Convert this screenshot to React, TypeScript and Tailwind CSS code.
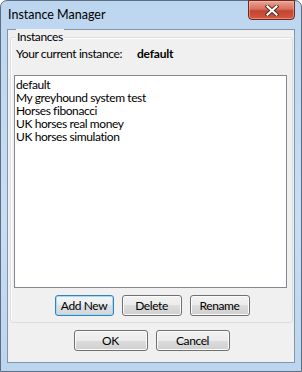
import React from "react";

const font = { fontFamily: 'Lato, "Open Sans", sans-serif' };

function Btn({ label, w, def }: { label: string; w: string; def?: boolean }) {
  return (
    <div
      className={
        "h-[21px] flex items-center justify-center rounded-[3px] border text-[12px] leading-none text-black " +
        w +
        " " +
        (def
          ? "border-[#3c7fb1] shadow-[inset_0_0_0_1px_#9fdcfa] bg-[linear-gradient(to_bottom,#f3f5f7_0%,#eaecee_50%,#dde0e3_50%,#d3d6d9_100%)]"
          : "border-[#707070] shadow-[inset_0_0_0_1px_#fbfbfb] bg-[linear-gradient(to_bottom,#f2f2f2_0%,#ebebeb_50%,#dddddd_50%,#cfcfcf_100%)]")
      }
    >
      {label}
    </div>
  );
}

export default function App() {
  const items = [
    "default",
    "My greyhound system test",
    "Horses fibonacci",
    "UK horses real money",
    "UK horses simulation",
  ];
  return (
    <div style={font} className="w-[302px] h-[372px] overflow-hidden tracking-[-0.4px]">
      <div className="relative w-[302px] h-[372px] rounded-t-[7px] border border-[#5d6e84] bg-[linear-gradient(to_bottom,#bdd6ef_0%,#c9ddf3_60%,#bcd5ee_100%)] px-[6px] pb-[8px] flex flex-col">
        {/* title bar */}
        <div className="h-[28px] flex items-center pl-[1px] text-[12.5px] tracking-[0px] text-black">
          Instance Manager
        </div>
        {/* close button */}
        <div className="absolute top-[-1px] right-[6px] w-[47px] h-[20px] rounded-b-[4px] border border-[#6e2a22] bg-[linear-gradient(to_bottom,#e8a596_0%,#d96f5c_45%,#c44330_55%,#d35a40_100%)] shadow-[inset_0_0_0_1px_rgba(255,200,190,0.45)] flex items-center justify-center">
          <svg width="14" height="11" viewBox="0 0 14 11">
            <path d="M2.5 1.5 L11.5 9.5 M11.5 1.5 L2.5 9.5" stroke="#4a2a26" strokeWidth="4" strokeLinecap="square" />
            <path d="M2.5 1.5 L11.5 9.5 M11.5 1.5 L2.5 9.5" stroke="#ffffff" strokeWidth="2.2" strokeLinecap="square" />
          </svg>
        </div>
        {/* client area */}
        <div className="flex-1 border border-[#8395ab] bg-[#f0f0f0] flex flex-col">
          {/* group box */}
          <div className="relative mt-[7px] ml-[2px] mr-[1px] h-[286px] rounded-[3px] border border-[#d5dfe5] shadow-[inset_1px_1px_0_#ffffff] flex flex-col">
            <div className="absolute left-[5px] top-[-9px] bg-[#f0f0f0] px-[1px] text-[12px] leading-[15px] text-black">
              Instances
            </div>
            <div className="mt-[8px] ml-[5px] flex text-[12px] leading-[15px] text-black">
              <span className="w-[121px]">Your current instance:</span>
              <span className="font-bold tracking-[-0.2px]">default</span>
            </div>
            <div className="mt-[14px] ml-[3px] w-[273px] h-[213px] border border-[#828790] bg-white pl-[1px] pt-[2px] flex flex-col">
              {items.map((t) => (
                <div key={t} className="text-[12px] leading-[13px] h-[13px] text-black whitespace-nowrap">
                  {t}
                </div>
              ))}
            </div>
            <div className="mt-[7px] flex justify-center gap-[8px] pl-[1px]">
              <Btn label="Add New" w="w-[59px]" def />
              <Btn label="Delete" w="w-[60px]" />
              <Btn label="Rename" w="w-[60px]" />
            </div>
          </div>
          <div className="mt-[7px] flex justify-center gap-[8px] pl-[1px]">
            <Btn label="OK" w="w-[74px]" />
            <Btn label="Cancel" w="w-[74px]" />
          </div>
        </div>
      </div>
    </div>
  );
}
